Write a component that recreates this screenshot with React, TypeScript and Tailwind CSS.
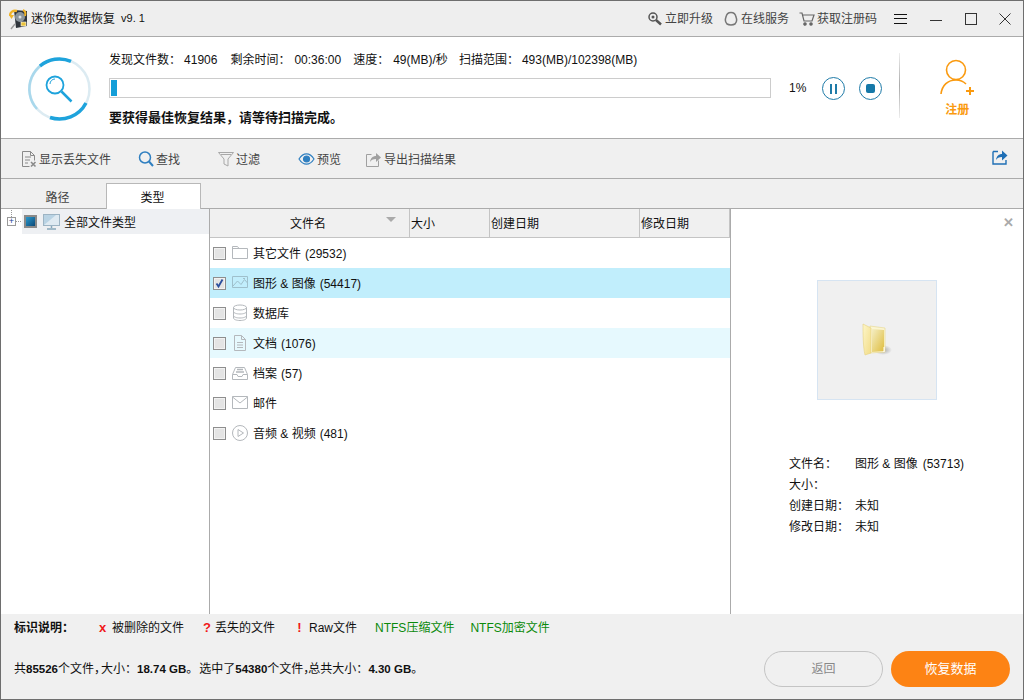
import { ReactNode } from "react";

const COLON = "\uFF1A";
const COMMA = "\uFF0C";

const Mono = ({ children }: { children: ReactNode }) => (
  <svg width="18" height="18" viewBox="0 0 18 18" fill="none" stroke="#b4b8bc" strokeWidth="1">
    {children}
  </svg>
);

const FolderIcon = () => (
  <Mono>
    <path d="M1.5 14.5V2.5h5l1.5 2h8.5v10z" />
    <path d="M1.5 4.5h6.5" />
  </Mono>
);
const ImageIcon = () => (
  <svg width="18" height="18" viewBox="0 0 18 18" fill="none" stroke="#9fc0cc" strokeWidth="1">
    <path d="M1.5 2.5h15v11h-15z" />
    <path d="M2 12l4.5-5 3.5 3.5 3.500-5 3 3.500" />
    <path d="M12 4.500h2" />
  </svg>
);
const DbIcon = () => (
  <Mono>
    <ellipse cx="9" cy="3.500" rx="6.500" ry="2.500" />
    <path d="M2.500 3.500v10.500c0 1.400 2.900 2.500 6.500 2.500s6.500-1.100 6.500-2.500V3.500" />
    <path d="M2.500 7.500c0 1.400 2.900 2.500 6.500 2.500s6.500-1.100 6.500-2.500M2.500 11.500c0 1.400 2.900 2.500 6.500 2.500s6.500-1.100 6.500-2.500" />
  </Mono>
);
const DocIcon = () => (
  <Mono>
    <path d="M3.500 1.500h7l4 4v11h-11z" />
    <path d="M10.500 1.500v4h4M6 8.500h6M6 11h6M6 13.500h6" />
  </Mono>
);
const ArchiveIcon = () => (
  <Mono>
    <path d="M1.500 10.500v5h15v-5l-3-7h-9z" />
    <path d="M1.500 10.500h4.500l1 2h4l1-2h4.500" />
    <path d="M5 8h8M6 5.500h6" strokeWidth="1.500" />
  </Mono>
);
const MailIcon = () => (
  <Mono>
    <path d="M1.500 2.500h15v12h-15z" />
    <path d="M1.500 3l7.500 6 7.500-6" />
  </Mono>
);
const PlayIcon = () => (
  <Mono>
    <circle cx="9" cy="9" r="7.500" />
    <path d="M7 5.500v7l5.500-3.500z" />
  </Mono>
);

const rows = [
  { label: "其它文件", count: "(29532)", icon: <FolderIcon />, bg: "" },
  { label: "图形 & 图像", count: "(54417)", icon: <ImageIcon />, bg: "bg-[#c1eefc]", checked: true },
  { label: "数据库", icon: <DbIcon />, bg: "" },
  { label: "文档", count: "(1076)", icon: <DocIcon />, bg: "bg-[#e6f9fe]" },
  { label: "档案", count: "(57)", icon: <ArchiveIcon />, bg: "" },
  { label: "邮件", icon: <MailIcon />, bg: "" },
  { label: "音频 & 视频", count: "(481)", icon: <PlayIcon />, bg: "" },
];

const tools = [
  {
    label: "显示丢失文件",
    w: "w-[117px]",
    icon: (
      <svg width="16" height="18" viewBox="0 0 16 18" fill="none" stroke="#8a8a8a">
        <path d="M1.500 1.500h8l4 4v5M1.500 1.500v15h7M9.500 1.500v4h4M4 7h6M4 10h5M4 13h3" />
        <path d="M10 12l4.500 4.500M14.500 12L10 16.500" strokeWidth="1.600" />
      </svg>
    ),
  },
  {
    label: "查找",
    w: "w-[80px]",
    icon: (
      <svg width="16" height="18" viewBox="0 0 16 18" fill="none" stroke="#2f7fc0" strokeWidth="1.500">
        <circle cx="7" cy="7.500" r="5.500" />
        <path d="M11 11.500l4 4.500" strokeWidth="2" />
      </svg>
    ),
  },
  {
    label: "过滤",
    w: "w-[80px]",
    icon: (
      <svg width="16" height="16" viewBox="0 0 16 16" fill="none" stroke="#a8a8a8">
        <path d="M.500 1.500h15L10 8v7l-4-2V8z" />
        <path d="M3 3.500h10" />
      </svg>
    ),
  },
  {
    label: "预览",
    w: "w-[68px]",
    icon: (
      <svg width="17" height="12" viewBox="0 0 16 12" fill="none" stroke="#2f7fc0" strokeWidth="1.200">
        <path d="M.500 6C3 2 5.500.800 8 .800S13 2 15.500 6C13 10 10.500 11.200 8 11.200S3 10 .500 6z" />
        <circle cx="8" cy="6" r="3" fill="#2f7fc0" />
      </svg>
    ),
  },
  {
    label: "导出扫描结果",
    w: "w-[120px]",
    icon: (
      <svg width="16" height="16" viewBox="0 0 16 16" fill="none" stroke="#a0a0a0">
        <path d="M.500 3.500h5M.500 3.500v12h12v-6" />
        <path d="M4 11c.500-4 3-6 6-6V2l5 4.500-5 4.500V8c-3 0-5 1-6 3z" fill="#a0a0a0" stroke="none" />
      </svg>
    ),
  },
];

const columns = [
  { label: "文件名", w: "w-[200px]" },
  { label: "大小", w: "w-[80px]" },
  { label: "创建日期", w: "w-[150px]" },
  { label: "修改日期", w: "w-[90px]" },
];

const legend = [
  { mark: "x", label: "被删除的文件", ml: "ml-[2px]", gap: "ml-[6px]" },
  { mark: "?", label: "丢失的文件", ml: "ml-[19px]", gap: "ml-[5px]" },
  { mark: "!", label: "Raw文件", ml: "ml-[21px]", gap: "ml-[6px]" },
];

const Checkbox = ({ checked }: { checked?: boolean }) => (
  <span className="w-[13px] h-[13px] border border-[#8e8e8e] bg-[#e4e4e4] flex items-center justify-center shrink-0 shadow-[inset_0_0_0_1px_#f2f2f2]">
    {checked && (
      <svg width="11" height="11" viewBox="0 0 11 11" fill="none" stroke="#2b4f9e" strokeWidth="1.800">
        <path d="M2.500 5.500l2 3 4-7" />
      </svg>
    )}
  </span>
);

const Logo = () => (
  <svg className="ml-[8px] shrink-0" width="19" height="22" viewBox="0 0 19 22">
    <path d="M5 2l13 1v15l-11 2z" fill="#2f353b" />
    <circle cx="11" cy="9" r="5" fill="#8b959c" />
    <circle cx="11" cy="9" r="1.500" fill="#dfe3e6" />
    <path d="M1 8c0-4 3-6 7-5" fill="none" stroke="#f0b429" strokeWidth="2.400" />
    <path d="M14 2c2 1 3 3 2 6" fill="none" stroke="#f0b429" strokeWidth="2" />
    <path d="M0 7h5l-2.500 4z" fill="#f0b429" />
    <rect x="12" y="14" width="5" height="4" fill="#e9c23d" stroke="#fff" strokeWidth=".6" />
    <path d="M2 21l4-5" stroke="#9a9a9a" strokeWidth="1.400" />
  </svg>
);

export default function App() {
  return (
    <div
      className="w-[1024px] h-[700px] flex flex-col bg-white border border-[#6e6e6e] text-[12px] text-[#111] overflow-hidden"
      style={{ fontFamily: '"Liberation Sans", "Noto Sans CJK SC", sans-serif' }}
    >
      {/* title bar */}
      <div className="h-[36px] shrink-0 flex items-center bg-[#eeeeee] border-b border-[#ababab]">
        <Logo />
        <span className="ml-[3px]">迷你兔数据恢复</span>
        <span className="ml-[6px] text-[11px]">v9. 1</span>
        <div className="ml-auto flex items-center text-[#444]">
          <svg width="16" height="16" viewBox="0 0 16 16" fill="none" stroke="#555" strokeWidth="1.500">
            <circle cx="6" cy="6" r="4" />
            <path d="M9 9l5 4.500" strokeWidth="2.500" />
            <circle cx="6" cy="6" r="1.500" fill="#555" stroke="none" />
          </svg>
          <span className="ml-[2px]">立即升级</span>
          <svg className="ml-[11px]" width="14" height="16" viewBox="0 0 14 16" fill="none" stroke="#777" strokeWidth="1.500">
            <path d="M3 13C1 11 1 8.500 2 6c.500-3 2.500-4.500 5-4.500S11.500 3 12 6c1 2.500 1 5-1 7-2 1.200-6 1.200-8 0z" />
          </svg>
          <span className="ml-[3px]">在线服务</span>
          <svg className="ml-[10px]" width="16" height="16" viewBox="0 0 16 16" fill="none" stroke="#666" strokeWidth="1.200">
            <path d="M.500 2h2.500l2 8h8l2-6H4" />
            <circle cx="6" cy="13" r="1.200" fill="#666" />
            <circle cx="12" cy="13" r="1.200" fill="#666" />
          </svg>
          <span className="ml-[2px]">获取注册码</span>
          <div className="ml-[17px] w-[13px] h-[10px] border-y border-[#111] flex items-center">
            <div className="w-full h-px bg-[#111]" />
          </div>
          <div className="ml-[23px] w-[12px] h-px bg-[#333] mt-[4px]" />
          <div className="ml-[23px] w-[12px] h-[12px] border border-[#333]" />
          <svg className="ml-[22px] mr-[12px]" width="12" height="12" viewBox="0 0 12 12" stroke="#333">
            <path d="M.500.500l11 11M11.500.500l-11 11" />
          </svg>
        </div>
      </div>

      {/* scan panel */}
      <div className="h-[102px] shrink-0 flex items-start border-b border-[#ababab]">
        <svg className="ml-[25px] mt-[19px] shrink-0" width="68" height="66" viewBox="0 0 68 66" fill="none">
          <circle cx="33.500" cy="33" r="30" stroke="#dcebf2" strokeWidth="2.500" />
          <path d="M32 3A30 30 0 0 0 11 53" stroke="#a9d8ec" strokeWidth="2.500" />
          <path d="M45 5.300A30 30 0 0 0 14 10" stroke="#1ea3dc" strokeWidth="3.500" />
          <path d="M24 61.500A30 30 0 0 0 60 47" stroke="#1ea3dc" strokeWidth="3.500" />
          <circle cx="29" cy="29" r="8.500" stroke="#1ea3dc" strokeWidth="1.800" />
          <path d="M24 28a5 5 0 0 1 5-5" stroke="#1ea3dc" />
          <path d="M35.500 35.500l10 10" stroke="#1ea3dc" strokeWidth="2.500" />
        </svg>
        <div className="ml-[15px] w-[662px] shrink-0 pt-[16px]">
          <div className="h-[14px] leading-[14px] flex">
            <span>发现文件数{COLON}</span>
            <span className="ml-[3px]">41906</span>
            <span className="ml-[13px]">剩余时间{COLON}</span>
            <span className="ml-[4px]">00:36:00</span>
            <span className="ml-[12px]">速度{COLON}</span>
            <span className="ml-[4px]">49(MB)/秒</span>
            <span className="ml-[11px]">扫描范围{COLON}</span>
            <span className="ml-[3px]">493(MB)/102398(MB)</span>
          </div>
          <div className="mt-[11px] h-[20px] border border-[#cccccc] p-[1px]">
            <div className="w-[6px] h-full bg-[#149ed8]" />
          </div>
          <div className="mt-[11px] font-bold text-[13px] leading-[18px]">要获得最佳恢复结果{COMMA}请等待扫描完成。</div>
        </div>
        <span className="ml-[18px] mt-[44px] leading-[14px]">1%</span>
        <div className="ml-[16px] mt-[40px] w-[23px] h-[23px] rounded-full border border-[#1f7ba8] flex items-center justify-center gap-[3px]">
          <div className="w-[2px] h-[10px] bg-[#1f7ba8]" />
          <div className="w-[2px] h-[10px] bg-[#1f7ba8]" />
        </div>
        <div className="ml-[14px] mt-[40px] w-[23px] h-[23px] rounded-full border border-[#1f7ba8] flex items-center justify-center">
          <div className="w-[9px] h-[9px] rounded-[2px] bg-[#1578a8]" />
        </div>
        <div className="ml-[17px] mt-[16px] w-px h-[65px] bg-gradient-to-b from-[#eeeeee] via-[#aaaaaa] to-[#eeeeee]" />
        <div className="ml-[40px] mt-[22px] flex flex-col items-center text-[#fa9a0f]">
          <svg width="34" height="40" viewBox="0 0 34 40" fill="none" stroke="#fa9a0f" strokeWidth="1.600">
            <circle cx="16" cy="11" r="9.500" />
            <path d="M1 35c1-9 7-14 15-14 4 0 7 1 10 4" />
            <path d="M26 32h8M30 28v8" strokeWidth="2" />
          </svg>
          <span className="font-bold mt-[2px]">注册</span>
        </div>
      </div>

      {/* toolbar */}
      <div className="h-[40px] shrink-0 flex items-center bg-[#f0f0f0] border-b border-[#ababab] text-[#444]">
        {tools.map((t) => (
          <div key={t.label} className={`flex items-center gap-[2px] shrink-0 pl-[20px] ${t.w}`}>
            {t.icon}
            <span className="translate-y-px">{t.label}</span>
          </div>
        ))}
        <svg className="ml-auto mr-[15px] -mt-[3px]" width="16" height="16" viewBox="0 0 16 16" fill="none" stroke="#1f6fb5" strokeWidth="1.400">
          <path d="M1 2.500h5M1 2.500V15h13v-4" />
          <path d="M4 11c.500-4 3-6 6-6V1.500l5.500 5L10 11.500V8c-3 0-5 1-6 3z" fill="#1f6fb5" stroke="none" />
        </svg>
      </div>

      {/* tabs */}
      <div className="h-[30px] shrink-0 flex items-end bg-[#f0f0f0] border-b border-[#ababab]">
        <div className="w-[105px] h-[25px] flex items-center justify-center text-[#444] pt-[4px] pl-[8px]">路径</div>
        <div className="w-[95px] h-[26px] -mb-px flex items-center justify-center bg-white border border-b-0 border-[#b8b8b8] pt-[2px] pr-[2px]">
          类型
        </div>
      </div>

      {/* main */}
      <div className="flex-1 flex min-h-0">
        <div className="w-[209px] shrink-0 border-r border-[#ababab]">
          <div className="h-[25px] flex items-center">
            <span className="relative ml-[6px] w-[9px] h-[9px] border border-[#9a9a9a] flex items-center justify-center text-[#1c3f94] text-[9px] leading-none shrink-0">
              +
              <span className="absolute left-[3px] -top-[8px] h-[7px] border-l border-dotted border-[#999]" />
              <span className="absolute left-[8px] top-[3px] w-[5px] border-t border-dotted border-[#999]" />
            </span>
            <div className="ml-[6px] flex-1 h-full bg-[#eef0f3] flex items-center">
              <span className="ml-[2px] w-[13px] h-[13px] border-2 border-[#8a8a8a] shrink-0 bg-gradient-to-br from-[#2a9bd0] to-[#0d4a78]" />
              <svg className="ml-[6px]" width="17" height="16" viewBox="0 0 17 16">
                <rect x=".500" y=".500" width="16" height="11" fill="#b9d3e4" stroke="#9db4c4" />
                <path d="M1 11l12-10h3v10z" fill="#dfeaf2" />
                <path d="M8.500 12v2M4 15h9" stroke="#86a6bb" strokeWidth="1.500" />
              </svg>
              <span className="ml-[4px] translate-y-px">全部文件类型</span>
            </div>
          </div>
        </div>

        <div className="w-[521px] shrink-0 border-r border-[#ababab]">
          <div className="h-[29px] flex bg-[#f0f0f0] border-b border-[#c4c4c4]">
            {columns.map((c, i) => (
              <div
                key={c.label}
                className={`relative flex items-center border-r border-[#c4c4c4] ${c.w} ${i === 0 ? "justify-center pr-[3px]" : "pl-[1px]"}`}
              >
                <span className="translate-y-px">{c.label}</span>
                {i === 0 && (
                  <span className="absolute right-[13px] top-[8px] w-0 h-0 border-x-[5px] border-x-transparent border-t-[5px] border-t-[#aaaaaa]" />
                )}
              </div>
            ))}
          </div>
          {rows.map((r) => (
            <div key={r.label} className={`h-[30px] flex items-center ${r.bg}`}>
              <div className="ml-[3px]">
                <Checkbox checked={r.checked} />
              </div>
              <div className="ml-[5px] flex">{r.icon}</div>
              <span className="ml-[4px] translate-y-px">
                {r.label}
                {r.count && <span className="ml-[4px]">{r.count}</span>}
              </span>
            </div>
          ))}
        </div>

        <div className="relative flex-1 flex flex-col">
          <span className="absolute right-[9px] top-[7px] text-[#aaaaaa] font-bold text-[13px] leading-[13px]">✕</span>
          <div className="ml-[86px] mt-[71px] w-[120px] h-[120px] bg-[#f0f0f0] border border-[#d6e4f2] flex items-center justify-center">
            <svg width="30" height="34" viewBox="0 0 30 34">
              <defs>
                <linearGradient id="flap" x1="0" y1="0" x2="1" y2="1">
                  <stop offset="0" stopColor="#fdf6c9" />
                  <stop offset="1" stopColor="#f2dc87" />
                </linearGradient>
                <linearGradient id="inner" x1="0" y1="0" x2="1" y2="1">
                  <stop offset="0" stopColor="#f4eec4" />
                  <stop offset="1" stopColor="#dfbd3f" />
                </linearGradient>
                <radialGradient id="shade">
                  <stop offset="0" stopColor="#a8a8a8" />
                  <stop offset="1" stopColor="#a8a8a8" stopOpacity="0" />
                </radialGradient>
              </defs>
              <ellipse cx="21" cy="27" rx="9" ry="5" fill="url(#shade)" />
              <path d="M8 3l15 2v24l-15 1z" fill="#fbf5d2" stroke="#e6d68c" strokeWidth=".6" />
              <path d="M10 6l12 1v21l-12 1z" fill="url(#inner)" />
              <path d="M1 1l8 4v25l-6 2C1 24 1 10 1 1z" fill="url(#flap)" stroke="#e6d27e" strokeWidth=".6" />
              <path d="M22 24v5" stroke="#fff" strokeWidth="1" />
            </svg>
          </div>
          <div className="ml-[58px] mt-[53px] grid grid-cols-[66px_1fr] auto-rows-[21px] items-center">
            <span>文件名{COLON}</span>
            <span>
              图形 & 图像<span className="ml-[5px]">(53713)</span>
            </span>
            <span>大小{COLON}</span>
            <span />
            <span>创建日期{COLON}</span>
            <span>未知</span>
            <span>修改日期{COLON}</span>
            <span>未知</span>
          </div>
        </div>
      </div>

      {/* footer */}
      <div className="h-[85px] shrink-0 bg-[#f0f0f0] relative">
        <div className="h-[28px] flex items-center">
          <span className="ml-[13px] w-[83px] font-bold">标识说明{COLON}</span>
          {legend.map((l) => (
            <span key={l.mark} className="contents">
              <span className={`${l.ml} w-[7px] text-center text-[#f01818] font-bold text-[13px]`}>{l.mark}</span>
              <span className={l.gap}>{l.label}</span>
            </span>
          ))}
          <span className="ml-[18px] text-[#0a8a0a]">NTFS压缩文件</span>
          <span className="ml-[16px] text-[#0a8a0a]">NTFS加密文件</span>
        </div>
        <div className="flex items-center pr-[13px] mt-[9px]">
          <div className="ml-[13px] whitespace-pre [&_b]:text-[11.5px]">
            共<b>85526</b>个文件<span className="tracking-[-5px]">{COMMA}</span>大小{COLON}<b>18.74 GB</b>。<span className="ml-px">选中了</span><b>54380</b>个文件
            <span className="tracking-[-7px]">{COMMA}</span>总共大小{COLON}<b>4.30 GB</b>。
          </div>
          <button className="ml-auto w-[119px] h-[36px] rounded-full border border-[#c4c4c4] text-[#888] text-[12px]">
            返回
          </button>
          <button className="ml-[8px] w-[119px] h-[36px] rounded-full bg-[#fd8314] text-white text-[13px]">
            恢复数据
          </button>
        </div>
      </div>
    </div>
  );
}
